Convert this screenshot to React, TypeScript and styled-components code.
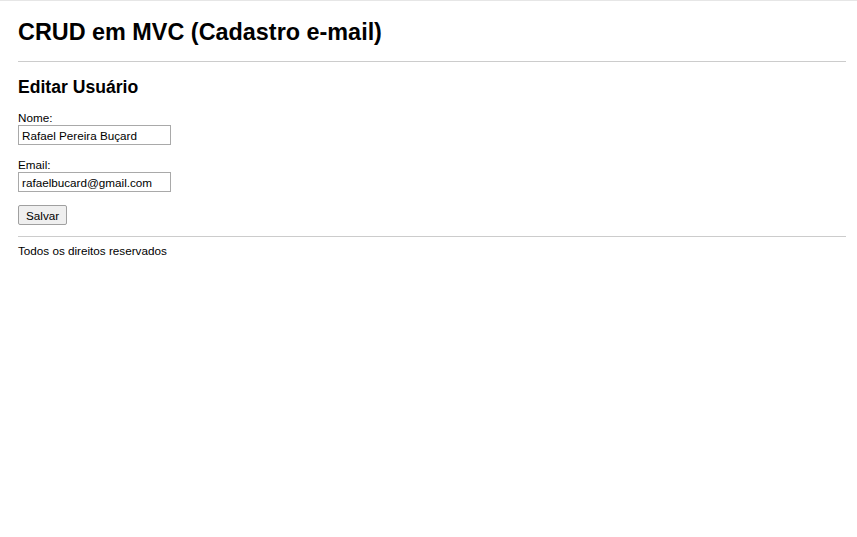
import styled, { createGlobalStyle } from "styled-components";

const Global = createGlobalStyle`
  html, body {
    margin: 0;
    padding: 0;
    background: #fff;
  }
  body {
    border-top: 1px solid #e6e6e6;
    font-family: "Liberation Sans", Arial, sans-serif;
    color: #000;
  }
`;

const Page = styled.div`
  padding: 17px 11px 0 18px;
`;

const Title = styled.h1`
  margin: 0;
  font-size: 23.4px;
  line-height: 28px;
  font-weight: bold;
`;

const Divider = styled.hr<{ gap: number }>`
  margin: ${(p) => p.gap}px 0 0;
  border: 0;
  height: 1px;
  background: #cccccc;
`;

const Subtitle = styled.h2`
  margin: 15px 0 0;
  font-size: 17.6px;
  line-height: 21px;
  font-weight: bold;
`;

const Form = styled.form`
  display: flex;
  flex-direction: column;
  align-items: flex-start;
  padding-top: 13px;
`;

const Field = styled.div`
  display: flex;
  flex-direction: column;
  align-items: flex-start;
  margin-bottom: 13px;
  font-size: 11.7px;
  line-height: 14px;
`;

const Input = styled.input`
  box-sizing: border-box;
  width: 153px;
  height: 20px;
  margin: 0;
  padding: 0 3px;
  border: 1px solid #a9a9a9;
  font-family: "Liberation Sans", Arial, sans-serif;
  font-size: 11.7px;
  color: #000;
`;

const Button = styled.button`
  box-sizing: border-box;
  height: 20px;
  padding: 0 7px;
  margin: 0;
  border: 1px solid #a0a0a0;
  border-radius: 2px;
  background: #efefef;
  font-family: "Liberation Sans", Arial, sans-serif;
  font-size: 11.7px;
  color: #000;
`;

const Footer = styled.footer`
  padding-top: 7px;
  font-size: 11.7px;
  line-height: 14px;
`;

export default function App() {
  return (
    <>
      <Global />
      <Page>
        <Title>CRUD em MVC (Cadastro e-mail)</Title>
        <Divider gap={15} />
        <Subtitle>Editar Usuário</Subtitle>
        <Form onSubmit={(e) => e.preventDefault()}>
          <Field>
            <label htmlFor="nome">Nome:</label>
            <Input id="nome" defaultValue="Rafael Pereira Buçard" />
          </Field>
          <Field>
            <label htmlFor="email">Email:</label>
            <Input id="email" defaultValue="rafaelbucard@gmail.com" />
          </Field>
          <Button type="submit">Salvar</Button>
        </Form>
        <Divider gap={11} />
        <Footer>Todos os direitos reservados</Footer>
      </Page>
    </>
  );
}
